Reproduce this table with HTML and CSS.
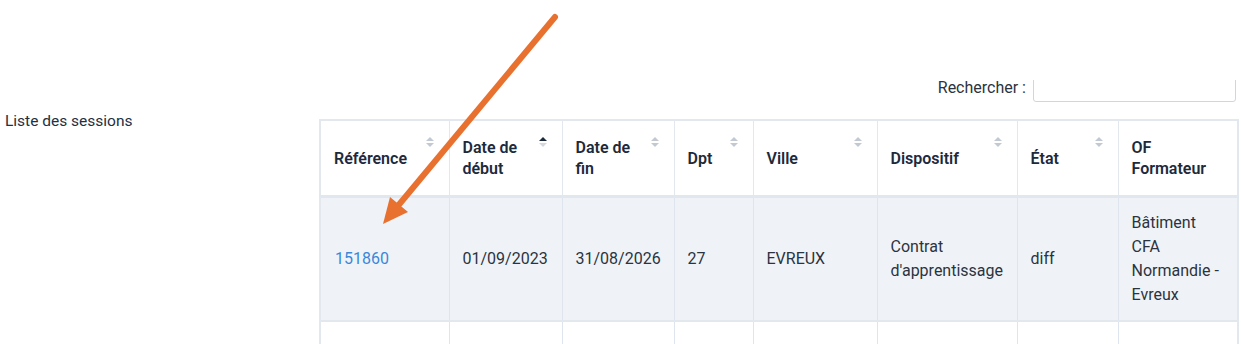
FILE: index.html
```html
<!DOCTYPE html>
<html lang="fr">
<head>
<meta charset="utf-8">
<title>Liste des sessions</title>
<link rel="stylesheet" href="styles.css">
</head>
<body>
<div class="page">
  <div class="side">
    <div class="side-label">Liste des sessions</div>
  </div>
  <div class="content">
    <div class="search-row">
      <label class="search-label" for="q">Rechercher :</label>
      <div class="search-clip">
        <input class="search-input" id="q" type="search">
      </div>
    </div>
    <table class="sessions">
      <colgroup>
        <col class="c-ref"><col class="c-deb"><col class="c-fin"><col class="c-dpt"><col class="c-ville"><col class="c-disp"><col class="c-etat"><col class="c-of">
      </colgroup>
      <thead>
        <tr>
          <th class="sortable">Référence<span class="sort"><i class="up"></i><i class="down"></i></span></th>
          <th class="sortable">Date de<br>début<span class="sort asc"><i class="up"></i><i class="down"></i></span></th>
          <th class="sortable">Date de<br>fin<span class="sort"><i class="up"></i><i class="down"></i></span></th>
          <th class="sortable">Dpt<span class="sort"><i class="up"></i><i class="down"></i></span></th>
          <th class="sortable">Ville<span class="sort"><i class="up"></i><i class="down"></i></span></th>
          <th class="sortable">Dispositif<span class="sort"><i class="up"></i><i class="down"></i></span></th>
          <th class="sortable">État<span class="sort"><i class="up"></i><i class="down"></i></span></th>
          <th>OF<br>Formateur</th>
        </tr>
      </thead>
      <tbody>
        <tr class="odd">
          <td><a class="ref" href="#">151860</a></td>
          <td>01/09/2023</td>
          <td>31/08/2026</td>
          <td>27</td>
          <td>EVREUX</td>
          <td>Contrat<br>d'apprentissage</td>
          <td>diff</td>
          <td>Bâtiment<br>CFA<br>Normandie -<br>Evreux</td>
        </tr>
        <tr class="even">
          <td>&nbsp;</td><td></td><td></td><td></td><td></td><td></td><td></td><td></td>
        </tr>
      </tbody>
    </table>
  </div>
</div>
<svg class="arrow" width="1241" height="344" viewBox="0 0 1241 344" aria-hidden="true">
  <line x1="555" y1="17" x2="397" y2="207" stroke="#e8712f" stroke-width="6" stroke-linecap="round"/>
  <polygon points="383,224 408,212 390,197" fill="#e8712f"/>
</svg>
</body>
</html>
```

FILE: styles.css
```css
html, body {
  margin: 0;
  padding: 0;
  background: #ffffff;
  height: 344px;
  overflow: hidden;
}
body {
  font-family: "Roboto", "Noto Sans", "Liberation Sans", sans-serif;
  font-size: 16px;
  color: #2b3340;
  position: relative;
}
.page {
  display: flex;
  align-items: flex-start;
}
.side {
  width: 314px;
  padding-left: 5px;
  padding-top: 112px;
}
.side-label {
  font-size: 15.5px;
  line-height: 18px;
  color: #243042;
}
.content {
  width: 918px;
  padding-top: 76px;
}
.search-row {
  display: flex;
  align-items: flex-end;
  justify-content: flex-end;
  height: 26px;
  margin-bottom: 17px;
}
.search-label {
  line-height: 20px;
  margin-right: 7px;
  margin-bottom: 4px;
  color: #2b3340;
}
.search-clip {
  height: 22px;
  overflow: hidden;
  display: flex;
  align-items: flex-end;
  margin-right: 1px;
}
.search-input {
  box-sizing: border-box;
  width: 203px;
  height: 30px;
  margin: 0;
  border: 1px solid #cdd6e2;
  border-radius: 3px;
  background: #fff;
  padding: 0 6px;
  font: inherit;
}
.sessions {
  table-layout: fixed;
  border-collapse: collapse;
  width: 918px;
  border: 2px solid #e3e8ef;
  border-bottom: none;
}
.c-ref { width: 129px; }
.c-deb { width: 113px; }
.c-fin { width: 112px; }
.c-dpt { width: 79px; }
.c-ville { width: 124px; }
.c-disp { width: 140px; }
.c-etat { width: 101px; }
.c-of { width: 120px; }
.sessions th {
  position: relative;
  text-align: left;
  font-weight: 600;
  color: #1d2a3c;
  line-height: 21px;
  padding: 16px 13px;
  height: 42px;
  border-left: 1px solid #e3e8ef;
  border-bottom: 3px solid #e1e7ef;
  vertical-align: middle;
}
.sort {
  position: absolute;
  top: 16px;
  right: 15px;
  width: 8px;
  display: flex;
  flex-direction: column;
  gap: 2px;
}
.sort i {
  display: block;
  width: 0;
  height: 0;
  border-left: 4px solid transparent;
  border-right: 4px solid transparent;
}
.sort .up { border-bottom: 4.5px solid #c3c9d2; }
.sort .down { border-top: 4.5px solid #c3c9d2; }
.sort.asc .up { border-bottom-color: #1d2a3c; }
.sort.asc .down { border-top-color: #d3d8df; }
.sessions td {
  line-height: 24px;
  padding: 13px 13px;
  border-left: 1px solid #dfe5ee;
  vertical-align: middle;
  color: #2b3340;
}
.sessions td:first-child {
  padding-left: 14px;
}
.sessions tr.odd td {
  background: #eff3f8;
  border-bottom: 2px solid #e3e8ef;
}
.sessions tr.even td {
  background: #ffffff;
  height: 60px;
}
.ref {
  color: #3a87d8;
  text-decoration: none;
}
.arrow {
  position: absolute;
  left: 0;
  top: 0;
  pointer-events: none;
}
```
